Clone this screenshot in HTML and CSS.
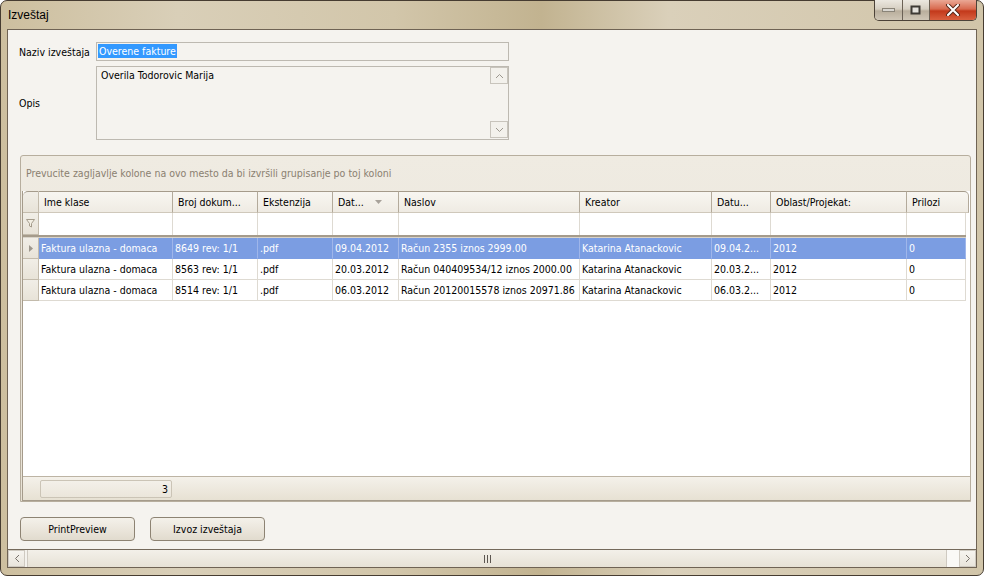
FILE: index.html
```html
<!DOCTYPE html>
<html lang="sr">
<head>
    <meta charset="UTF-8">
    <title>Izveštaj</title>
    <link rel="stylesheet" href="styles.css">
</head>
<body>
    <div class="window">
        <div class="titlebar">
            <span class="title">Izveštaj</span>
            <div class="caption-buttons">
                <div class="cap cap-min">
                    <svg width="14" height="5" viewBox="0 0 14 5"><rect x="0.5" y="0.5" width="12" height="3" fill="#d9d6d0" stroke="#8a8478"/></svg>
                </div>
                <div class="cap cap-max">
                    <svg width="12" height="10" viewBox="0 0 12 10"><rect x="1.5" y="1.5" width="8" height="7" fill="#e4e1db" stroke="#3e3a34" stroke-width="2"/></svg>
                </div>
                <div class="cap cap-close">
                    <svg width="16" height="12" viewBox="0 0 16 12"><path d="M3 1 L13 11 M13 1 L3 11" stroke="#5a2a1c" stroke-width="4" stroke-linecap="round"/><path d="M3 1 L13 11 M13 1 L3 11" stroke="#ffffff" stroke-width="2" stroke-linecap="round"/></svg>
                </div>
            </div>
        </div>

        <div class="client">
            <div class="content">
                <div class="form-row">
                    <label class="form-label">Naziv izveštaja</label>
                    <div class="textbox"><span class="selected">Overene fakture</span></div>
                </div>
                <div class="form-row form-row-memo">
                    <label class="form-label">Opis</label>
                    <div class="memo">
                        <div class="memo-text">Overila Todorovic Marija</div>
                        <div class="vscroll">
                            <div class="vbtn">
                                <svg width="9" height="6" viewBox="0 0 9 6"><path d="M1 5 L4.5 1.5 L8 5" fill="none" stroke="#9c978e" stroke-width="1"/></svg>
                            </div>
                            <div class="vtrack"></div>
                            <div class="vbtn">
                                <svg width="9" height="6" viewBox="0 0 9 6"><path d="M1 1 L4.5 4.5 L8 1" fill="none" stroke="#9c978e" stroke-width="1"/></svg>
                            </div>
                        </div>
                    </div>
                </div>

                <div class="grid-panel">
                    <div class="group-area">Prevucite zagljavlje kolone na ovo mesto da bi izvršili grupisanje po toj koloni</div>
                    <div class="grid">
                        <div class="grid-row grid-head">
                            <div class="cell ind"></div>
                            <div class="cell">Ime klase</div>
                            <div class="cell">Broj dokum...</div>
                            <div class="cell">Ekstenzija</div>
                            <div class="cell">Dat...
                                <svg class="sort" width="7" height="4" viewBox="0 0 7 4"><path d="M0 0 L7 0 L3.5 4 Z" fill="#a8a29a"/></svg>
                            </div>
                            <div class="cell">Naslov</div>
                            <div class="cell">Kreator</div>
                            <div class="cell">Datu...</div>
                            <div class="cell">Oblast/Projekat:</div>
                            <div class="cell">Prilozi</div>
                        </div>
                        <div class="grid-row grid-filter">
                            <div class="cell ind">
                                <svg width="9" height="9" viewBox="0 0 9 9"><path d="M0.5 0.5 L8.5 0.5 L5.5 4.5 L5.5 8 L3.5 7 L3.5 4.5 Z" fill="#f3efe4" stroke="#a59c8c"/></svg>
                            </div>
                            <div class="cell"></div>
                            <div class="cell"></div>
                            <div class="cell"></div>
                            <div class="cell"></div>
                            <div class="cell"></div>
                            <div class="cell"></div>
                            <div class="cell"></div>
                            <div class="cell"></div>
                            <div class="cell"></div>
                        </div>
                        <div class="grid-sep"></div>
                        <div class="grid-row data selected-row">
                            <div class="cell ind">
                                <svg width="4" height="7" viewBox="0 0 4 7"><path d="M0 0 L4 3.5 L0 7 Z" fill="#9d978d"/></svg>
                            </div>
                            <div class="cell">Faktura ulazna - domaca</div>
                            <div class="cell">8649 rev: 1/1</div>
                            <div class="cell">.pdf</div>
                            <div class="cell">09.04.2012</div>
                            <div class="cell">Račun 2355 iznos 2999.00</div>
                            <div class="cell">Katarina Atanackovic</div>
                            <div class="cell">09.04.2...</div>
                            <div class="cell">2012</div>
                            <div class="cell">0</div>
                        </div>
                        <div class="grid-row data">
                            <div class="cell ind"></div>
                            <div class="cell">Faktura ulazna - domaca</div>
                            <div class="cell">8563 rev: 1/1</div>
                            <div class="cell">.pdf</div>
                            <div class="cell">20.03.2012</div>
                            <div class="cell">Račun 040409534/12 iznos 2000.00</div>
                            <div class="cell">Katarina Atanackovic</div>
                            <div class="cell">20.03.2...</div>
                            <div class="cell">2012</div>
                            <div class="cell">0</div>
                        </div>
                        <div class="grid-row data">
                            <div class="cell ind"></div>
                            <div class="cell">Faktura ulazna - domaca</div>
                            <div class="cell">8514 rev: 1/1</div>
                            <div class="cell">.pdf</div>
                            <div class="cell">06.03.2012</div>
                            <div class="cell">Račun 20120015578 iznos 20971.86</div>
                            <div class="cell">Katarina Atanackovic</div>
                            <div class="cell">06.03.2...</div>
                            <div class="cell">2012</div>
                            <div class="cell">0</div>
                        </div>
                        <div class="grid-empty"></div>
                        <div class="grid-footer">
                            <div class="summary">3</div>
                        </div>
                    </div>
                </div>

                <div class="button-row">
                    <button class="btn">PrintPreview</button>
                    <button class="btn">Izvoz izveštaja</button>
                </div>
            </div>

            <div class="hscroll">
                <div class="hbtn">
                    <svg width="6" height="9" viewBox="0 0 6 9"><path d="M5 1 L1.5 4.5 L5 8" fill="none" stroke="#77716a" stroke-width="1"/></svg>
                </div>
                <div class="hthumb">
                    <svg width="7" height="8" viewBox="0 0 7 8"><path d="M0.5 0 V8 M3.5 0 V8 M6.5 0 V8" stroke="#5c5650" stroke-width="1"/></svg>
                </div>
                <div class="htrack"></div>
                <div class="hbtn">
                    <svg width="6" height="9" viewBox="0 0 6 9"><path d="M1 1 L4.5 4.5 L1 8" fill="none" stroke="#77716a" stroke-width="1"/></svg>
                </div>
            </div>
        </div>
    </div>
</body>
</html>
```

FILE: styles.css
```css
body {
    margin: 0;
    background: #ffffff;
    font-family: "DejaVu Sans Condensed", "DejaVu Sans", sans-serif;
    font-stretch: condensed;
    font-size: 10.5px;
    color: #000000;
}
.window {
    width: 984px;
    height: 576px;
    box-sizing: border-box;
    display: flex;
    flex-direction: column;
    padding: 0 6px 7px 6px;
    border: 1px solid #463c31;
    border-radius: 7px;
    background: linear-gradient(90deg, #cdbf9f 0%, #d9cfb8 18%, #d2c6aa 40%, #c2b390 55%, #dad0ba 68%, #d1c5a9 100%);
}
.titlebar {
    height: 28px;
    display: flex;
    align-items: flex-start;
}
.title {
    font-family: "Liberation Sans", Arial, sans-serif;
    font-stretch: normal;
    font-size: 12px;
    margin: 7px 0 0 1px;
    color: #000;
}
.caption-buttons {
    margin-left: auto;
    margin-top: -1px;
    display: flex;
    height: 20px;
    border: 1px solid #4c4238;
    border-top: none;
    border-radius: 0 0 5px 5px;
    overflow: hidden;
}
.cap {
    display: flex;
    align-items: center;
    justify-content: center;
}
.cap-min {
    width: 27px;
    border-right: 1px solid #6b6155;
    background: linear-gradient(180deg, #ece8e0 0%, #d6cfc2 45%, #b9ae9c 55%, #cfc6b6 100%);
}
.cap-max {
    width: 26px;
    border-right: 1px solid #6b6155;
    background: linear-gradient(180deg, #ece8e0 0%, #d6cfc2 45%, #b9ae9c 55%, #cfc6b6 100%);
}
.cap-close {
    width: 46px;
    background: linear-gradient(180deg, #eaa895 0%, #d86a4f 45%, #c3391b 55%, #d9603f 100%);
}
.client {
    flex: 1;
    display: flex;
    flex-direction: column;
    background: #f5f3ef;
    border: 1px solid #6f6354;
}
.content {
    flex: 1;
    display: flex;
    flex-direction: column;
    padding: 12px 5px 0 11px;
}
.form-row {
    display: flex;
    align-items: center;
    height: 19px;
}
.form-label {
    width: 77px;
}
.textbox {
    width: 413px;
    height: 19px;
    box-sizing: border-box;
    border: 1px solid #bdb9b1;
    padding: 2px 1px;
    line-height: 13px;
}
.selected {
    background: #3399ff;
    color: #ffffff;
    padding: 1px 1px;
}
.form-row-memo {
    height: 74px;
    margin-top: 5px;
}
.memo {
    width: 413px;
    height: 74px;
    box-sizing: border-box;
    border: 1px solid #bdb9b1;
    display: flex;
}
.memo-text {
    flex: 1;
    padding: 2px 4px;
}
.vscroll {
    width: 18px;
    display: flex;
    flex-direction: column;
    padding: 0 0 1px 0;
}
.vbtn {
    height: 17px;
    box-sizing: border-box;
    border: 1px solid #c8c4bc;
    display: flex;
    align-items: center;
    justify-content: center;
    background: #f3f1ec;
}
.vtrack {
    flex: 1;
}
.grid-panel {
    margin: 15px 0 0 1px;
    width: 951px;
    height: 347px;
    box-sizing: border-box;
    border: 1px solid #b7ae9e;
    border-radius: 3px 3px 0 0;
    display: flex;
    flex-direction: column;
    background: linear-gradient(180deg, #efebe2 0%, #e8e2d5 100%);
}
.group-area {
    height: 35px;
    box-sizing: border-box;
    padding: 11px 0 0 5px;
    color: #8a8070;
}
.grid {
    flex: 1;
    margin: 0 0 0 1px;
    display: flex;
    flex-direction: column;
    background: #ffffff;
    border-left: 1px solid #a59b8b;
    border-bottom: 1px solid #a59b8b;
}
.grid-row {
    display: grid;
    grid-template-columns: 16px 134px 85px 75px 66px 181px 132px 59px 136px 59px;
}
.cell {
    box-sizing: border-box;
    border-right: 1px solid #dedad2;
    border-bottom: 1px solid #dedad2;
    padding: 0 2px;
    white-space: nowrap;
    overflow: hidden;
    display: flex;
    align-items: center;
}
.grid-head {
    height: 22px;
}
.grid-head .cell {
    padding-left: 5px;
    border-top: 1px solid #a59b8b;
    border-right: 1px solid #b3aa9b;
    border-bottom: 1px solid #cfc8bb;
    background: linear-gradient(180deg, #f8f6f1 0%, #efebe3 100%);
}
.grid-head .cell:first-child {
    border-radius: 5px 0 0 0;
}
.grid-head .cell:last-child {
    border-radius: 0 5px 0 0;
    width: 62px;
}
.sort {
    margin-left: 11px;
}
.grid-filter {
    height: 22px;
}
.grid-filter .cell {
    border-bottom: none;
}
.cell.ind {
    padding: 0;
    justify-content: center;
    background: linear-gradient(180deg, #f1eee7 0%, #e8e3d8 100%);
    border-right: 1px solid #c3bbac;
    border-bottom: 1px solid #c3bbac;
}
.grid-head .cell.ind {
    padding: 0;
}
.grid-sep {
    width: 943px;
    height: 3px;
    box-sizing: border-box;
    border-top: 2px solid #a59b8b;
    border-bottom: 1px solid #d8d3c9;
}
.data {
    height: 21px;
}
.selected-row .cell {
    background: #7b9de2;
    color: #ffffff;
    border-right-color: #9fb6ea;
    border-bottom-color: #7b9de2;
}
.selected-row .cell.ind {
    background: linear-gradient(180deg, #f1eee7 0%, #e8e3d8 100%);
    border-right-color: #c3bbac;
    border-bottom-color: #c3bbac;
}
.grid-empty {
    flex: 1;
}
.grid-footer {
    height: 24px;
    box-sizing: border-box;
    border-top: 1px solid #bdb4a4;
    background: linear-gradient(180deg, #f4f1ea 0%, #e7e1d3 100%);
    padding: 3px 0 0 17px;
}
.summary {
    width: 132px;
    height: 18px;
    box-sizing: border-box;
    border: 1px solid #cbc4b6;
    border-radius: 2px;
    text-align: right;
    padding: 2px 3px 0 0;
    background: linear-gradient(180deg, #f3f0e9 0%, #ebe6db 100%);
}
.button-row {
    display: flex;
    gap: 15px;
    margin: 15px 0 0 1px;
}
.btn {
    width: 115px;
    height: 24px;
    font-family: "DejaVu Sans Condensed", "DejaVu Sans", sans-serif;
    font-stretch: condensed;
    font-size: 10.5px;
    color: #000;
    border: 1px solid #8d8373;
    border-radius: 4px;
    background: linear-gradient(180deg, #f4f1ea 0%, #ebe6dc 50%, #e1dbce 100%);
    padding: 0;
}
.hscroll {
    height: 17px;
    display: flex;
    border-top: 1px solid #74695b;
    background: #f4f2ed;
}
.hbtn {
    width: 17px;
    box-sizing: border-box;
    border: 1px solid #cfcac1;
    display: flex;
    align-items: center;
    justify-content: center;
    background: linear-gradient(180deg, #f6f4ef 0%, #e9e5dc 100%);
}
.hthumb {
    width: 920px;
    margin-left: 2px;
    box-sizing: border-box;
    border-left: 1px solid #cfcac1;
    border-right: 1px solid #cfcac1;
    display: flex;
    align-items: center;
    justify-content: center;
    background: linear-gradient(180deg, #f3f0e9 0%, #e7e2d6 100%);
}
.htrack {
    flex: 1;
    background: #faf9f6;
}
```
